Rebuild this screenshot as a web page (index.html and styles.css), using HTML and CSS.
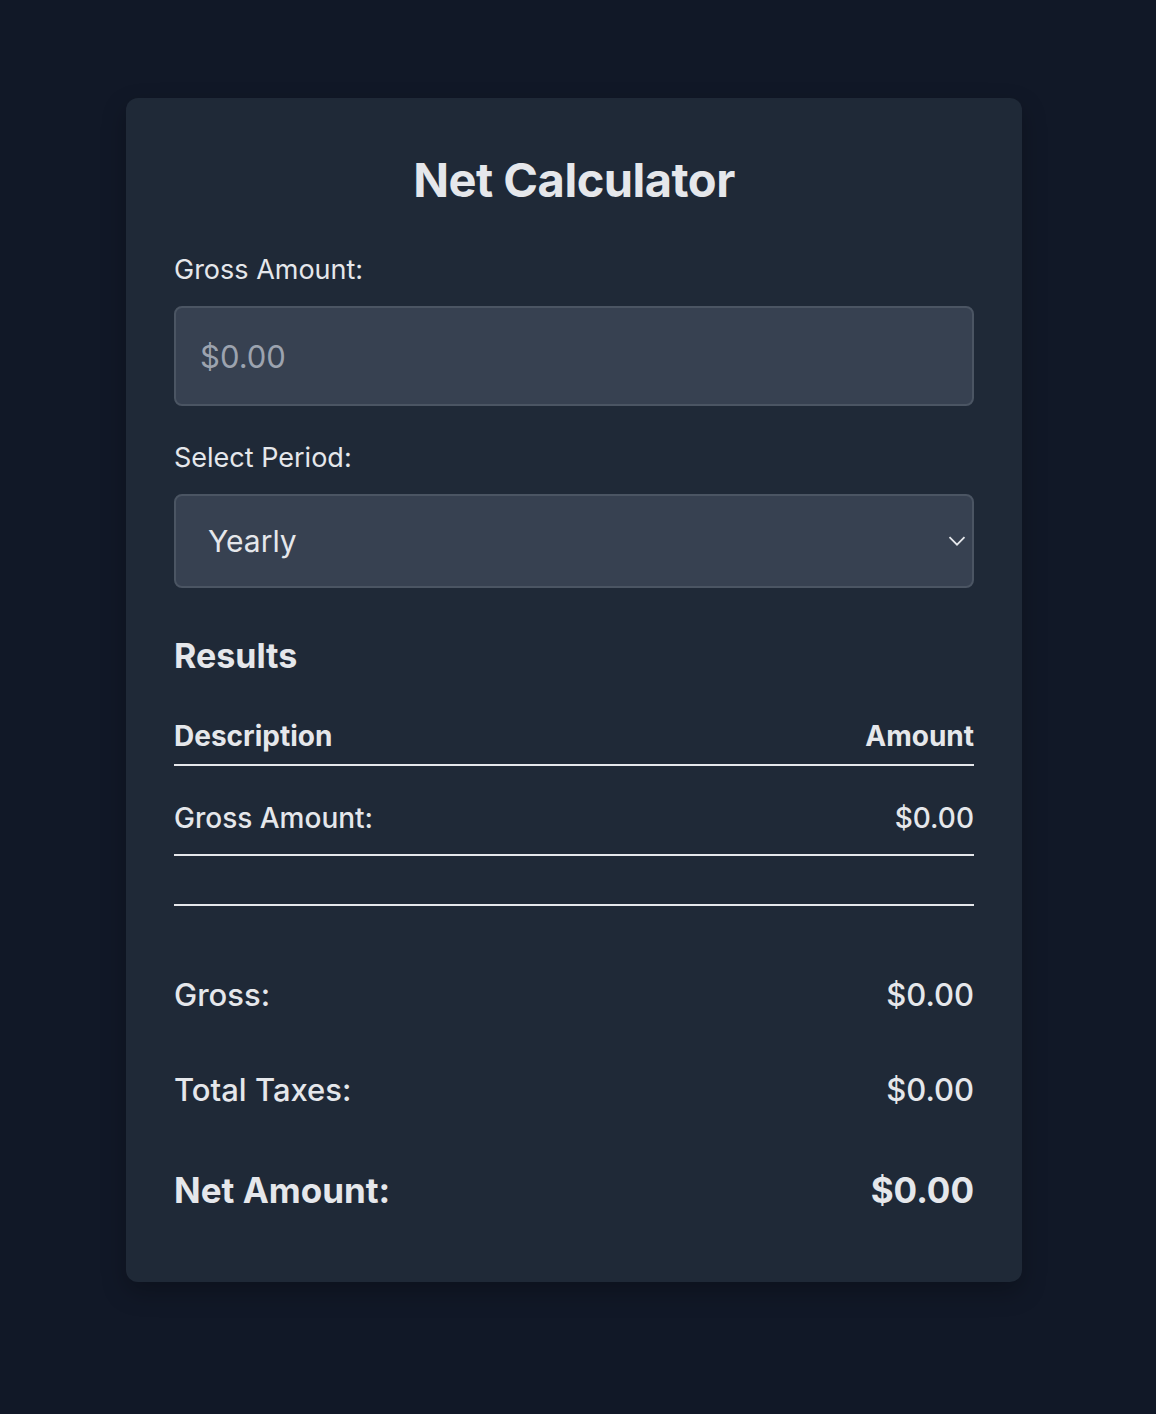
FILE: index.html
```html
<!DOCTYPE html>
<html lang="en">
<head>
<meta charset="utf-8">
<title>Net Calculator</title>
<link rel="stylesheet" href="styles.css">
</head>
<body>
<main class="card">
  <h1 class="title">Net Calculator</h1>
  <div class="field">
    <label class="label" for="gross">Gross Amount:</label>
    <input class="input" id="gross" type="text" placeholder="$0.00">
  </div>
  <div class="field">
    <label class="label label-2" for="period">Select Period:</label>
    <div class="select-wrap">
      <select class="select" id="period">
        <option>Yearly</option>
        <option>Monthly</option>
      </select>
      <svg class="chev" width="18" height="10" viewBox="0 0 18 10"><path d="M1.5 1.2l7.5 7.5 7.5-7.5" fill="none" stroke="#e5e7eb" stroke-width="1.8"/></svg>
    </div>
  </div>
  <h2 class="results-title">Results</h2>
  <table class="table">
    <thead>
      <tr><th class="left">Description</th><th class="right">Amount</th></tr>
    </thead>
    <tbody>
      <tr><td class="left">Gross Amount:</td><td class="right">$0.00</td></tr>
      <tr class="empty"><td></td><td></td></tr>
    </tbody>
  </table>
  <div class="summary">
    <div class="sum-row"><span>Gross:</span><span>$0.00</span></div>
    <div class="sum-row taxes"><span>Total Taxes:</span><span>$0.00</span></div>
    <div class="sum-row net"><span>Net Amount:</span><span>$0.00</span></div>
  </div>
</main>
</body>
</html>
```
FILE: styles.css
```css
* { box-sizing: border-box; }
html, body { margin: 0; padding: 0; }
body {
  background: #111827;
  font-family: Inter, "Noto Sans", sans-serif;
  color: #e5e7eb;
  padding: 98px 0 0 126px;
  min-height: 1414px;
}
.card {
  width: 896px;
  height: 1184px;
  background: #1f2937;
  border-radius: 12px;
  padding: 48px;
  box-shadow: 0 10px 25px rgba(0,0,0,0.25);
}
.title {
  margin: 6px 0 0;
  text-align: center;
  font-size: 47px;
  font-weight: 700;
  line-height: 56px;
  color: #e5e7eb;
  letter-spacing: -0.5px;
}
.field { display: flex; flex-direction: column; }
.label {
  font-size: 27px;
  line-height: 32px;
  margin-top: 46px;
  margin-bottom: 20px;
  color: #e5e7eb;
}
.label-2 { margin-top: 36px; }
.input {
  height: 100px;
  width: 100%;
  background: #374151;
  border: 2px solid #4b5563;
  border-radius: 8px;
  padding: 0 24px;
  font-family: inherit;
  font-size: 31px;
  color: #e5e7eb;
  outline: none;
}
.input::placeholder { color: #9ca3af; }
.select-wrap { position: relative; }
.select {
  -webkit-appearance: none;
  appearance: none;
  width: 100%;
  height: 94px;
  background: #374151;
  border: 2px solid #4b5563;
  border-radius: 8px;
  padding: 0 32px;
  font-family: inherit;
  font-size: 30px;
  color: #e5e7eb;
}
.chev { position: absolute; right: 8px; top: 42px; }
.results-title {
  margin: 48px 0 0;
  font-size: 34px;
  line-height: 40px;
  font-weight: 700;
}
.table {
  width: 100%;
  border-collapse: collapse;
  margin-top: 44px;
}
.table th {
  font-size: 28px;
  line-height: 32px;
  font-weight: 700;
  padding: 0 0 12px;
  border-bottom: 2px solid #e5e7eb;
}
.table td {
  font-size: 28px;
  font-weight: 500;
  height: 90px;
  border-bottom: 2px solid #e5e7eb;
  padding: 16px 0 0;
}
.table .empty td { height: 50px; padding: 0; }
.left { text-align: left; }
.right { text-align: right; }
.summary { margin-top: 71px; display: flex; flex-direction: column; }
.sum-row {
  display: flex;
  justify-content: space-between;
  font-size: 31px;
  line-height: 36px;
  font-weight: 500;
}
.sum-row.taxes { margin-top: 59px; }
.sum-row.net { margin-top: 62px; font-size: 35px; line-height: 40px; font-weight: 700; }
```
